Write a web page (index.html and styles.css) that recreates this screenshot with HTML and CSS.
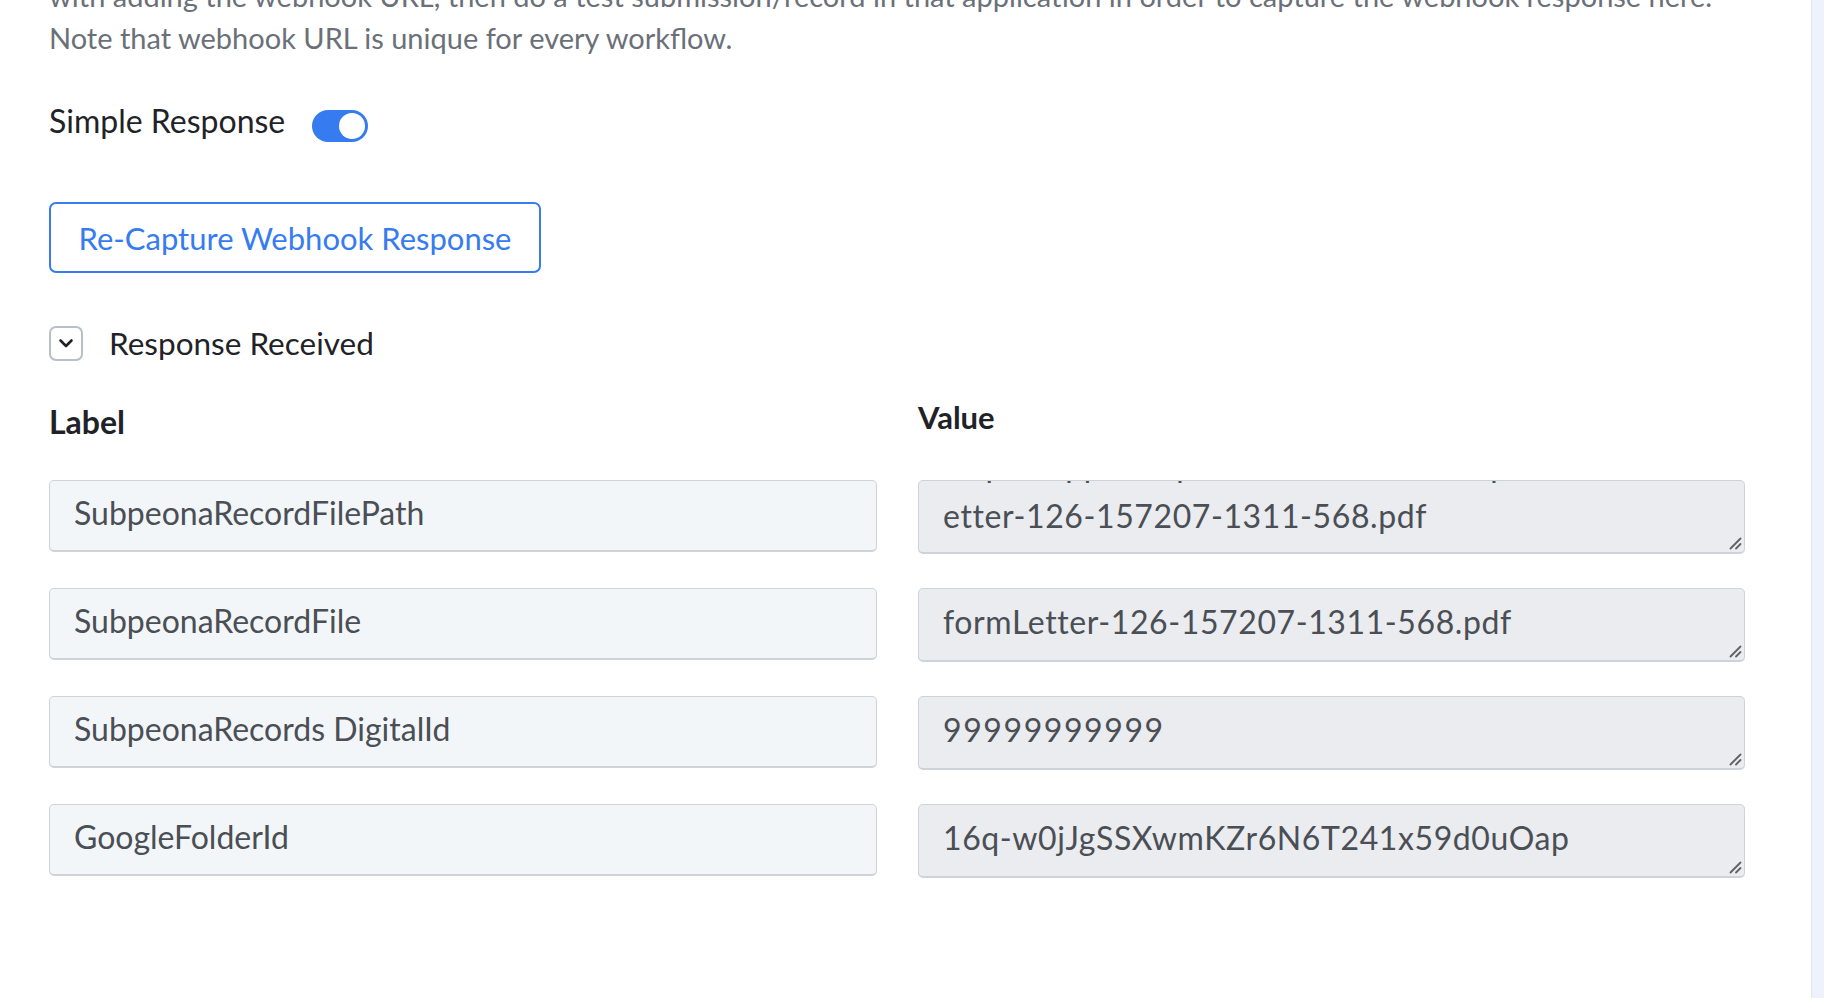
FILE: index.html
```html
<!DOCTYPE html>
<html lang="en">
<head>
<meta charset="utf-8">
<title>Webhook Response</title>
<link rel="stylesheet" href="styles.css">
</head>
<body>
<div class="page">
  <main class="content">
    <p class="desc">with adding the webhook URL, then do a test submission/record in that application in order to capture the webhook response here.<br>Note that webhook URL is unique for every workflow.</p>

    <div class="simple-row">
      <span class="simple-label">Simple Response</span>
      <span class="toggle"><span class="knob"></span></span>
    </div>

    <button class="btn-outline" type="button">Re-Capture Webhook Response</button>

    <div class="received-row">
      <span class="chev-box">
        <svg width="18" height="11" viewBox="0 0 18 11"><path d="M3.5 2.5 L9 8 L14.5 2.5" fill="none" stroke="#1f2328" stroke-width="2.6" stroke-linecap="round" stroke-linejoin="round"/></svg>
      </span>
      <span class="received-label">Response Received</span>
    </div>

    <div class="grid">
      <div class="col-head head-label">Label</div>
      <div class="col-head head-value">Value</div>

      <div class="field label-field">SubpeonaRecordFilePath</div>
      <div class="field value-field">
        <div class="scroll-text scrolled">
          <div class="line">https://apps.subpeona.com/records/uploads/formL</div>
          <div class="line">etter-126-157207-1311-568.pdf</div>
        </div>
        <svg class="grip" width="14" height="14" viewBox="0 0 14 14"><path d="M12.5 2.5 L2.5 12.5 M12.5 8 L8 12.5" stroke="#606165" stroke-width="1.8" stroke-linecap="round"/></svg>
      </div>

      <div class="field label-field">SubpeonaRecordFile</div>
      <div class="field value-field">
        <div class="scroll-text"><div class="line">formLetter-126-157207-1311-568.pdf</div></div>
        <svg class="grip" width="14" height="14" viewBox="0 0 14 14"><path d="M12.5 2.5 L2.5 12.5 M12.5 8 L8 12.5" stroke="#606165" stroke-width="1.8" stroke-linecap="round"/></svg>
      </div>

      <div class="field label-field">SubpeonaRecords DigitalId</div>
      <div class="field value-field">
        <div class="scroll-text"><div class="line digits">99999999999</div></div>
        <svg class="grip" width="14" height="14" viewBox="0 0 14 14"><path d="M12.5 2.5 L2.5 12.5 M12.5 8 L8 12.5" stroke="#606165" stroke-width="1.8" stroke-linecap="round"/></svg>
      </div>

      <div class="field label-field">GoogleFolderId</div>
      <div class="field value-field">
        <div class="scroll-text"><div class="line">16q-w0jJgSSXwmKZr6N6T241x59d0uOap</div></div>
        <svg class="grip" width="14" height="14" viewBox="0 0 14 14"><path d="M12.5 2.5 L2.5 12.5 M12.5 8 L8 12.5" stroke="#606165" stroke-width="1.8" stroke-linecap="round"/></svg>
      </div>
    </div>
  </main>
  <div class="scrollbar"></div>
</div>
</body>
</html>
```

FILE: styles.css
```css
* { box-sizing: border-box; }
html, body { margin: 0; padding: 0; background: #ffffff; }
body {
  font-family: Lato, "Open Sans", "Noto Sans", sans-serif;
  color: #1f2328;
  width: 1824px;
  height: 998px;
  overflow: hidden;
}
.page {
  display: flex;
  width: 1824px;
  height: 998px;
}
.content {
  flex: 1;
  padding: 0 66px 0 49px;
}
.scrollbar {
  width: 13px;
  background: #eef2fb;
  border-left: 1px solid #dde4f3;
}
.desc {
  margin: -25px 0 0 0;
  font-size: 29px;
  line-height: 42px;
  color: #6b7078;
  white-space: nowrap;
}
.simple-row {
  display: flex;
  align-items: center;
  gap: 27px;
  margin-top: 45px;
  height: 34px;
}
.simple-label {
  font-size: 32px;
  line-height: 34px;
  color: #1f2328;
}
.toggle {
  position: relative;
  width: 56px;
  height: 32px;
  border-radius: 16px;
  background: #367cf0;
  margin-top: 10px;
}
.knob {
  position: absolute;
  right: 3px;
  top: 3px;
  width: 26px;
  height: 26px;
  border-radius: 50%;
  background: #ffffff;
}
.btn-outline {
  display: block;
  margin-top: 64px;
  height: 71px;
  width: 492px;
  padding: 0;
  border: 2px solid #367cf0;
  border-radius: 7px;
  background: #ffffff;
  color: #367cf0;
  font-family: inherit;
  font-size: 31px;
  text-align: center;
  cursor: pointer;
}
.received-row {
  display: flex;
  align-items: center;
  gap: 26px;
  margin-top: 53px;
  height: 35px;
}
.chev-box {
  display: flex;
  align-items: center;
  justify-content: center;
  width: 34px;
  height: 35px;
  border: 2px solid #b9bfc7;
  border-radius: 7px;
}
.received-label {
  font-size: 31.5px;
  line-height: 35px;
  color: #1f2328;
}
.grid {
  display: grid;
  grid-template-columns: 828px 827px;
  column-gap: 41px;
  row-gap: 34px;
  margin-top: 42px;
  align-items: start;
}
.col-head {
  font-weight: 700;
  color: #1f2328;
  line-height: 34px;
  height: 41px;
  margin-bottom: 2px;
}
.head-label { font-size: 32px; padding-top: 2px; }
.head-value { font-size: 31px; margin-top: -3px; height: 44px; }
.field {
  position: relative;
  border: 1px solid #ced3d9;
  border-bottom-width: 2px;
  border-radius: 5px;
  font-size: 32px;
  color: #4a4e55;
  padding: 0 24px;
}
.label-field {
  height: 72px;
  line-height: 64px;
  background: #f3f6f9;
}
.value-field {
  height: 74px;
  background: #eaecef;
  overflow: hidden;
  letter-spacing: 0.6px;
}
.scroll-text {
  padding-top: 14px;
  line-height: 38px;
}
.scroll-text.scrolled {
  margin-top: -42px;
  padding-top: 0;
  line-height: 51px;
}
.line { white-space: nowrap; }
.digits { letter-spacing: 1.6px; }
.grip {
  position: absolute;
  right: 2px;
  bottom: 2px;
}
```
